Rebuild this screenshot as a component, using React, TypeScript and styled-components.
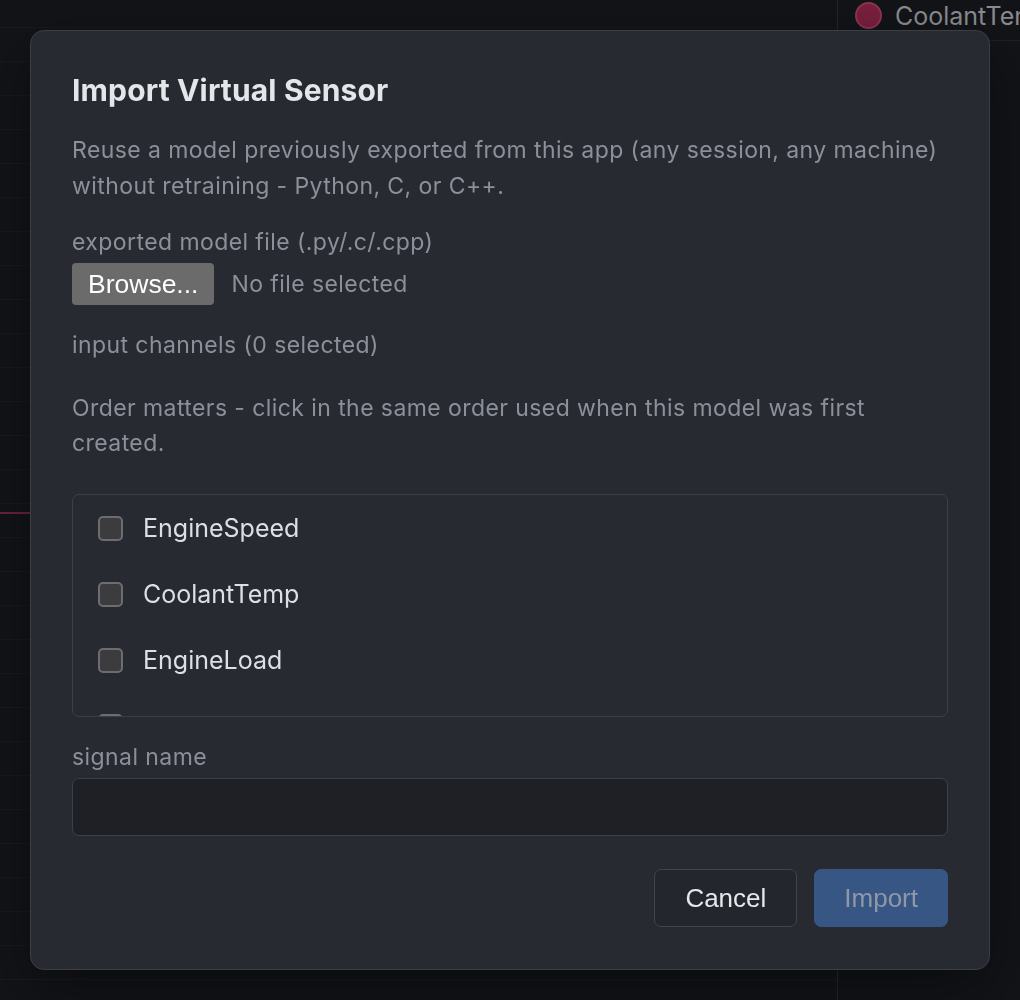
import React from "react";
import styled, { createGlobalStyle } from "styled-components";

const GlobalStyle = createGlobalStyle`
  html, body {
    margin: 0;
    padding: 0;
    background: #131418;
  }
  * { box-sizing: border-box; }
`;

const SANS = `Inter, "Noto Sans", "Liberation Sans", sans-serif`;
const UI = `"Liberation Sans", Arial, sans-serif`;

/* ---------- workspace behind the dialog ---------- */

const Shell = styled.div`
  display: flex;
  width: 1020px;
  height: 1000px;
  background: #131418;
  overflow: hidden;
`;

const ChartArea = styled.div`
  position: relative;
  flex: 1;
  background-image: repeating-linear-gradient(
    to bottom,
    transparent 0px,
    transparent 33px,
    #191a1f 33px,
    #191a1f 34px
  );
  background-position: 0 -6px;
`;

const Trace = styled.div`
  position: absolute;
  left: 0;
  right: 0;
  top: 512px;
  height: 2px;
  background: #6b2340;
`;

const SidePanel = styled.aside`
  width: 183px;
  border-left: 1px solid #24262c;
  display: flex;
  flex-direction: column;
`;

const LegendRow = styled.div`
  height: 41px;
  border-bottom: 1px solid #1f2126;
  display: flex;
  align-items: center;
  gap: 13px;
  padding: 0 0 9px 17px;
  white-space: nowrap;
`;

const Swatch = styled.span<{ $color: string }>`
  width: 27px;
  height: 27px;
  border-radius: 50%;
  background: ${(p) => p.$color};
  border: 2px solid #8c3554;
  flex: none;
`;

const LegendName = styled.span`
  font-family: ${SANS};
  font-size: 25px;
  color: #8a8c91;
`;

/* ---------- dialog ---------- */

const Overlay = styled.div`
  position: fixed;
  inset: 0;
  display: flex;
  align-items: center;
  justify-content: center;
`;

const Dialog = styled.div`
  width: 960px;
  height: 940px;
  background: #272a31;
  border: 1px solid #3b3e46;
  border-radius: 14px;
  padding: 41px 41px 41px;
  display: flex;
  flex-direction: column;
  font-family: ${SANS};
  box-shadow: 0 20px 60px rgba(0, 0, 0, 0.4);
`;

const Title = styled.h2`
  margin: 0;
  font-size: 30px;
  line-height: 36px;
  font-weight: 700;
  letter-spacing: 0.15px;
  color: #e4e6ea;
`;

const Text = styled.p<{ $gap: number; $lh?: number }>`
  margin: ${(p) => p.$gap}px 0 0;
  font-size: 23px;
  letter-spacing: 0.42px;
  line-height: ${(p) => p.$lh ?? 36}px;
  color: #8b909a;
`;

const FileRow = styled.div`
  margin-top: 5px;
  display: flex;
  align-items: center;
  gap: 17px;
`;

const BrowseButton = styled.button`
  height: 42px;
  padding: 0 16px;
  border: none;
  border-radius: 4px;
  background: #6b6b6b;
  color: #ffffff;
  font-family: ${UI};
  font-size: 26.5px;
`;

const FileStatus = styled.span`
  font-size: 23px;
  letter-spacing: 0.42px;
  color: #8b909a;
`;

const ChannelList = styled.div`
  margin-top: 33px;
  height: 223px;
  border: 1px solid #3c3f46;
  border-radius: 7px;
  overflow: hidden;
  display: flex;
  flex-direction: column;
  flex: none;
`;

const ChannelRow = styled.label`
  flex: none;
  height: 66px;
  display: flex;
  align-items: center;
  gap: 20px;
  padding-left: 25px;
`;

const Box = styled.span`
  width: 25px;
  height: 25px;
  border-radius: 5px;
  border: 2px solid #6c6d71;
  background: #3c3c3f;
  flex: none;
`;

const ChannelName = styled.span`
  font-size: 25px;
  color: #dcdfe4;
`;

const NameInput = styled.input`
  margin-top: 5px;
  height: 58px;
  width: 100%;
  border: 1px solid #3d4047;
  border-radius: 7px;
  background: #1f2026;
  outline: none;
`;

const Actions = styled.div`
  margin-top: 33px;
  display: flex;
  justify-content: flex-end;
  gap: 17px;
`;

const ActionButton = styled.button<{ $primary?: boolean }>`
  height: 58px;
  padding: 0 ${(p) => (p.$primary ? 29 : 30)}px;
  border-radius: 7px;
  font-family: ${UI};
  font-size: 26px;
  border: 1px solid ${(p) => (p.$primary ? "#385684" : "#41444b")};
  background: ${(p) => (p.$primary ? "#385684" : "#23262c")};
  color: ${(p) => (p.$primary ? "#8f98a8" : "#e6e8ec")};
`;

const channels = ["EngineSpeed", "CoolantTemp", "EngineLoad", "OilTemp"];

export default function App() {
  return (
    <>
      <GlobalStyle />
      <Shell>
        <ChartArea>
          <Trace />
        </ChartArea>
        <SidePanel>
          <LegendRow>
            <Swatch $color="#7a1f3d" />
            <LegendName>CoolantTemp</LegendName>
          </LegendRow>
        </SidePanel>
      </Shell>
      <Overlay>
        <Dialog>
          <Title>Import Virtual Sensor</Title>
          <Text $gap={24}>
            Reuse a model previously exported from this app (any session, any machine)
            without retraining - Python, C, or C++.
          </Text>
          <Text $gap={22} $lh={32}>exported model file (.py/.c/.cpp)</Text>
          <FileRow>
            <BrowseButton>Browse...</BrowseButton>
            <FileStatus>No file selected</FileStatus>
          </FileRow>
          <Text $gap={24} $lh={32}>input channels (0 selected)</Text>
          <Text $gap={30} $lh={35}>
            Order matters - click in the same order used when this model was first
            created.
          </Text>
          <ChannelList>
            {channels.map((c) => (
              <ChannelRow key={c}>
                <Box />
                <ChannelName>{c}</ChannelName>
              </ChannelRow>
            ))}
          </ChannelList>
          <Text $gap={24} $lh={32}>signal name</Text>
          <NameInput />
          <Actions>
            <ActionButton>Cancel</ActionButton>
            <ActionButton $primary>Import</ActionButton>
          </Actions>
        </Dialog>
      </Overlay>
    </>
  );
}
